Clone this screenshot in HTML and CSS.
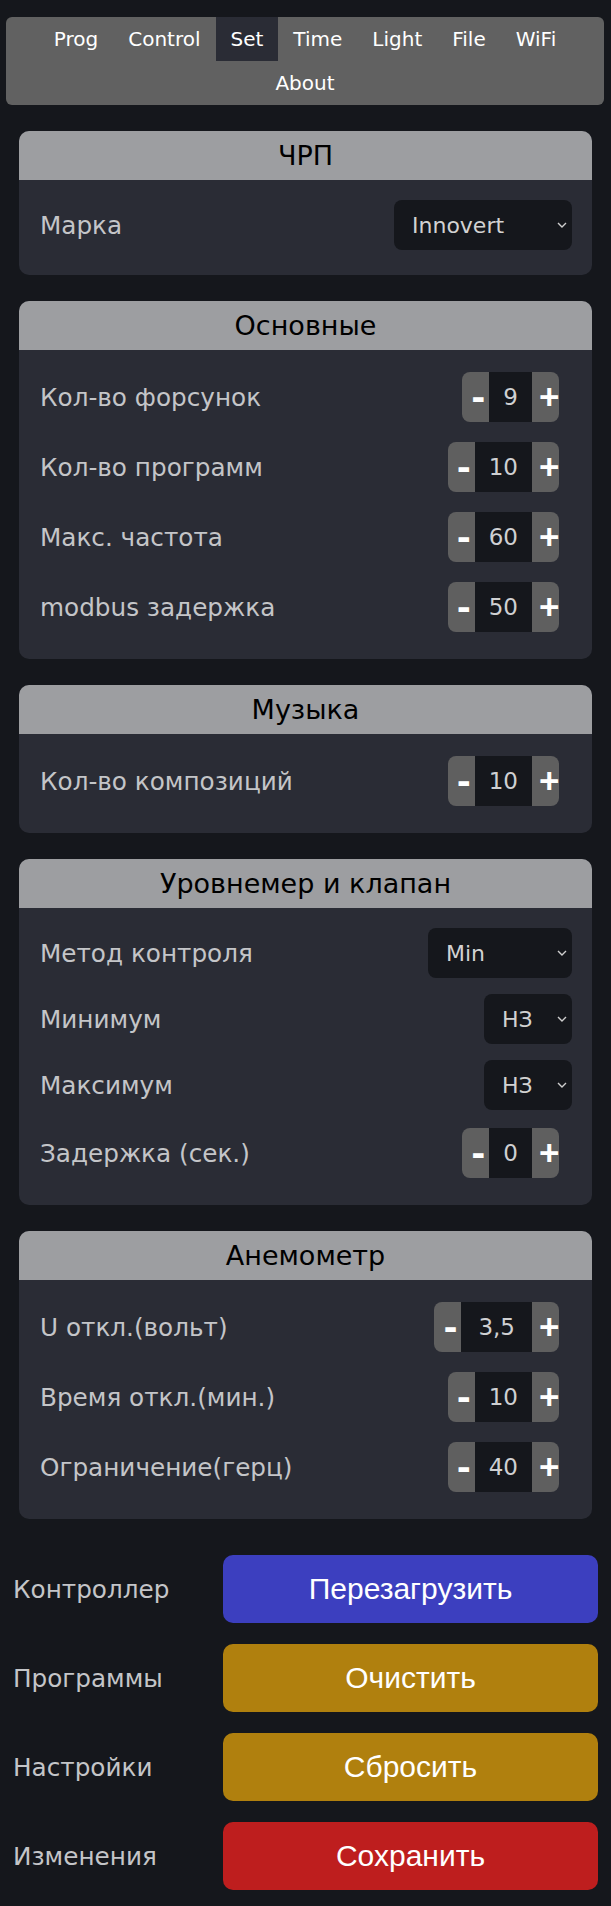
FILE: index.html
```html
<!DOCTYPE html>
<html lang="ru">
<head>
<meta charset="utf-8">
<title>Set</title>
<link rel="stylesheet" href="styles.css">
</head>
<body>
<nav class="nav">
  <a href="#">Prog</a>
  <a href="#">Control</a>
  <a href="#" class="active">Set</a>
  <a href="#">Time</a>
  <a href="#">Light</a>
  <a href="#">File</a>
  <a href="#">WiFi</a>
  <a href="#">About</a>
</nav>

<main class="cards">
  <section class="card">
    <h2 class="card-head">ЧРП</h2>
    <div class="card-body">
      <div class="row">
        <span class="label">Марка</span>
        <div class="select select-wide">
          <select><option>Innovert</option></select>
          <svg class="chev" viewBox="0 0 10 6"><path d="M1 1l4 4 4-4" fill="none" stroke="#cfcfcf" stroke-width="1.4"/></svg>
        </div>
      </div>
    </div>
  </section>

  <section class="card">
    <h2 class="card-head">Основные</h2>
    <div class="card-body">
      <div class="row row-step">
        <span class="label">Кол-во форсунок</span>
        <div class="stepper"><button class="dec">-</button><span class="val">9</span><button class="inc">+</button></div>
      </div>
      <div class="row row-step">
        <span class="label">Кол-во программ</span>
        <div class="stepper"><button class="dec">-</button><span class="val">10</span><button class="inc">+</button></div>
      </div>
      <div class="row row-step">
        <span class="label">Макс. частота</span>
        <div class="stepper"><button class="dec">-</button><span class="val">60</span><button class="inc">+</button></div>
      </div>
      <div class="row row-step">
        <span class="label">modbus задержка</span>
        <div class="stepper"><button class="dec">-</button><span class="val">50</span><button class="inc">+</button></div>
      </div>
    </div>
  </section>

  <section class="card">
    <h2 class="card-head">Музыка</h2>
    <div class="card-body">
      <div class="row row-step">
        <span class="label">Кол-во композиций</span>
        <div class="stepper"><button class="dec">-</button><span class="val">10</span><button class="inc">+</button></div>
      </div>
    </div>
  </section>

  <section class="card">
    <h2 class="card-head">Уровнемер и клапан</h2>
    <div class="card-body">
      <div class="row">
        <span class="label">Метод контроля</span>
        <div class="select select-mid">
          <select><option>Min</option></select>
          <svg class="chev" viewBox="0 0 10 6"><path d="M1 1l4 4 4-4" fill="none" stroke="#cfcfcf" stroke-width="1.4"/></svg>
        </div>
      </div>
      <div class="row">
        <span class="label">Минимум</span>
        <div class="select select-narrow">
          <select><option>НЗ</option></select>
          <svg class="chev" viewBox="0 0 10 6"><path d="M1 1l4 4 4-4" fill="none" stroke="#cfcfcf" stroke-width="1.4"/></svg>
        </div>
      </div>
      <div class="row">
        <span class="label">Максимум</span>
        <div class="select select-narrow">
          <select><option>НЗ</option></select>
          <svg class="chev" viewBox="0 0 10 6"><path d="M1 1l4 4 4-4" fill="none" stroke="#cfcfcf" stroke-width="1.4"/></svg>
        </div>
      </div>
      <div class="row row-step">
        <span class="label">Задержка (сек.)</span>
        <div class="stepper"><button class="dec">-</button><span class="val">0</span><button class="inc">+</button></div>
      </div>
    </div>
  </section>

  <section class="card">
    <h2 class="card-head">Анемометр</h2>
    <div class="card-body">
      <div class="row row-step">
        <span class="label">U откл.(вольт)</span>
        <div class="stepper"><button class="dec">-</button><span class="val val-wide">3,5</span><button class="inc">+</button></div>
      </div>
      <div class="row row-step">
        <span class="label">Время откл.(мин.)</span>
        <div class="stepper"><button class="dec">-</button><span class="val">10</span><button class="inc">+</button></div>
      </div>
      <div class="row row-step">
        <span class="label">Ограничение(герц)</span>
        <div class="stepper"><button class="dec">-</button><span class="val">40</span><button class="inc">+</button></div>
      </div>
    </div>
  </section>
</main>

<div class="actions">
  <span class="label">Контроллер</span>
  <button class="action blue">Перезагрузить</button>
  <span class="label">Программы</span>
  <button class="action gold">Очистить</button>
  <span class="label">Настройки</span>
  <button class="action gold">Сбросить</button>
  <span class="label">Изменения</span>
  <button class="action red">Сохранить</button>
</div>
</body>
</html>
```

FILE: styles.css
```css
* { box-sizing: border-box; }

body {
  margin: 0;
  background: #15171c;
  font-family: "DejaVu Sans", Verdana, sans-serif;
}

.nav {
  margin: 17px 7px 0 6px;
  background: #616161;
  border-radius: 6px;
  display: flex;
  flex-wrap: wrap;
  justify-content: center;
}

.nav a {
  color: #ffffff;
  text-decoration: none;
  font-size: 20px;
  line-height: 24px;
  padding: 10px 15px;
}

.nav a.active {
  background: #2a2c35;
}

.cards {
  display: flex;
  flex-direction: column;
  gap: 26px;
  margin: 26px 19px 0;
}

.card {
  background: #2a2c35;
  border-radius: 10px;
  overflow: hidden;
}

.card-head {
  margin: 0;
  height: 49px;
  background: #9d9ea1;
  color: #000000;
  font-weight: normal;
  font-size: 27px;
  display: flex;
  align-items: center;
  justify-content: center;
}

.card-body {
  padding: 17px 20px 22px 21px;
  display: flex;
  flex-direction: column;
  gap: 10px;
}

.row {
  display: flex;
  align-items: center;
  justify-content: space-between;
  min-height: 56px;
}

.row-step {
  min-height: 60px;
}

.label {
  color: #c4c5c8;
  font-size: 24.7px;
}

.select {
  position: relative;
  height: 50px;
}

.select select {
  appearance: none;
  -webkit-appearance: none;
  height: 50px;
  border: 0;
  border-radius: 8px;
  background: #15171c;
  color: #d2d2d2;
  font-family: "DejaVu Sans", Verdana, sans-serif;
  font-size: 22px;
  padding: 0 0 0 18px;
  outline: none;
}

.select-wide select { width: 178px; }
.select-mid select { width: 144px; }
.select-narrow select { width: 88px; }

.chev {
  position: absolute;
  right: 5px;
  top: 22px;
  width: 10px;
  height: 6px;
  pointer-events: none;
}

.stepper {
  display: flex;
  height: 50px;
  margin-right: 13px;
  border-radius: 8px;
  overflow: hidden;
}

.stepper button {
  width: 27px;
  height: 50px;
  border: 0;
  background: #5f5f5f;
  color: #ffffff;
  font-weight: bold;
  line-height: 50px;
  text-align: left;
  white-space: nowrap;
}

.stepper .dec {
  font-family: "DejaVu Sans", Verdana, sans-serif;
  font-size: 34px;
  padding: 0 0 0 9px;
}

.stepper .inc {
  font-family: "Liberation Sans", Arial, sans-serif;
  font-size: 35px;
  padding: 0 0 0 7px;
}

.val {
  display: flex;
  align-items: center;
  background: #15171c;
  color: #cfd0d2;
  font-size: 23px;
  padding: 0 14px;
}

.val-wide {
  padding: 0 17px;
}

.actions {
  display: grid;
  grid-template-columns: 1fr 375px;
  align-items: center;
  row-gap: 21px;
  margin: 36px 13px 15px 13px;
}

.action {
  height: 68px;
  border: 0;
  border-radius: 10px;
  color: #ffffff;
  font-family: "Liberation Sans", Arial, sans-serif;
  font-size: 30px;
}

.blue { background: #3c3fbf; }
.gold { background: #b0800e; }
.red { background: #be1e1e; }
```
